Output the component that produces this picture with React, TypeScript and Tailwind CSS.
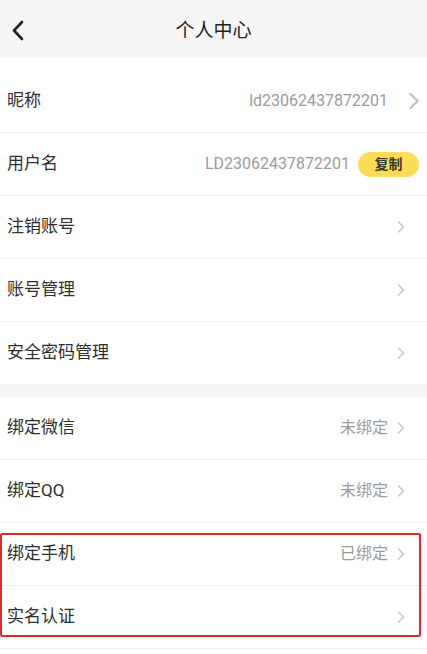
import React from 'react';

const font = { fontFamily: 'Roboto, "Noto Sans CJK SC", sans-serif' };

interface RowProps {
  label: string;
  value?: string;
  big?: boolean;
  copy?: boolean;
  last?: boolean;
}

const Chevron = ({ big }: { big?: boolean }) =>
  big ? (
    <svg width="10" height="16" viewBox="0 0 10 16" className="shrink-0">
      <polyline points="1.5,1 8.5,8 1.5,15" fill="none" stroke="#bdbdbd" strokeWidth="2" strokeLinecap="round" strokeLinejoin="round" />
    </svg>
  ) : (
    <svg width="8" height="12" viewBox="0 0 8 12" className="shrink-0">
      <polyline points="1.5,1 6.5,6 1.5,11" fill="none" stroke="#c6c6c6" strokeWidth="1.5" strokeLinecap="round" strokeLinejoin="round" />
    </svg>
  );

const Row: React.FC<RowProps> = ({ label, value, big, copy, last }) => (
  <div
    className={
      'flex h-[62px] items-center pl-[7px] ' +
      (big || copy ? 'pr-[8px] ' : 'pr-[22px] ') +
      (last ? '' : 'border-b border-[#efefef] box-content')
    }
  >
    <span className="flex-1 text-[17px] text-[#2e2e2e]">{label}</span>
    {value && (
      <span className={'text-[16px] text-[#9b9b9b] ' + (big ? 'mr-[21px]' : copy ? 'mr-[8px]' : 'mr-[9px]')}>
        {value}
      </span>
    )}
    {copy ? (
      <span className="flex h-[25px] w-[61px] items-center justify-center rounded-full bg-[#fbdc58] text-[14px] font-bold text-[#3a3a2a]">
        复制
      </span>
    ) : (
      <Chevron big={big} />
    )}
  </div>
);

export default function App() {
  return (
    <div className="relative min-h-[654px] w-[427px] overflow-hidden bg-white" style={font}>
      {/* header */}
      <div className="relative flex h-[57px] items-center justify-center bg-[#f5f5f5] pt-[5px]">
        <svg width="14" height="22" viewBox="0 0 14 22" className="absolute left-[11px] top-[20px]">
          <polyline points="11,2 3,10.5 11,19" fill="none" stroke="#222222" strokeWidth="2.6" strokeLinecap="round" strokeLinejoin="round" />
        </svg>
        <span className="text-[19px] text-[#222222]">个人中心</span>
      </div>

      <div className="pt-[13px]">
        <Row label="昵称" value="ld23062437872201" big />
        <Row label="用户名" value="LD23062437872201" copy />
        <Row label="注销账号" />
        <Row label="账号管理" />
        <Row label="安全密码管理" last />
      </div>

      <div className="h-[13px] bg-[#f5f5f5]" />

      <div className="relative">
        <Row label="绑定微信" value="未绑定" />
        <Row label="绑定QQ" value="未绑定" />
        <Row label="绑定手机" value="已绑定" />
        <Row label="实名认证" />
        {/* annotation box */}
        <div className="pointer-events-none absolute left-0 top-[136px] h-[104px] w-[421px] rounded-[2px] border-2 border-[#e02b2b]" />
      </div>
    </div>
  );
}
